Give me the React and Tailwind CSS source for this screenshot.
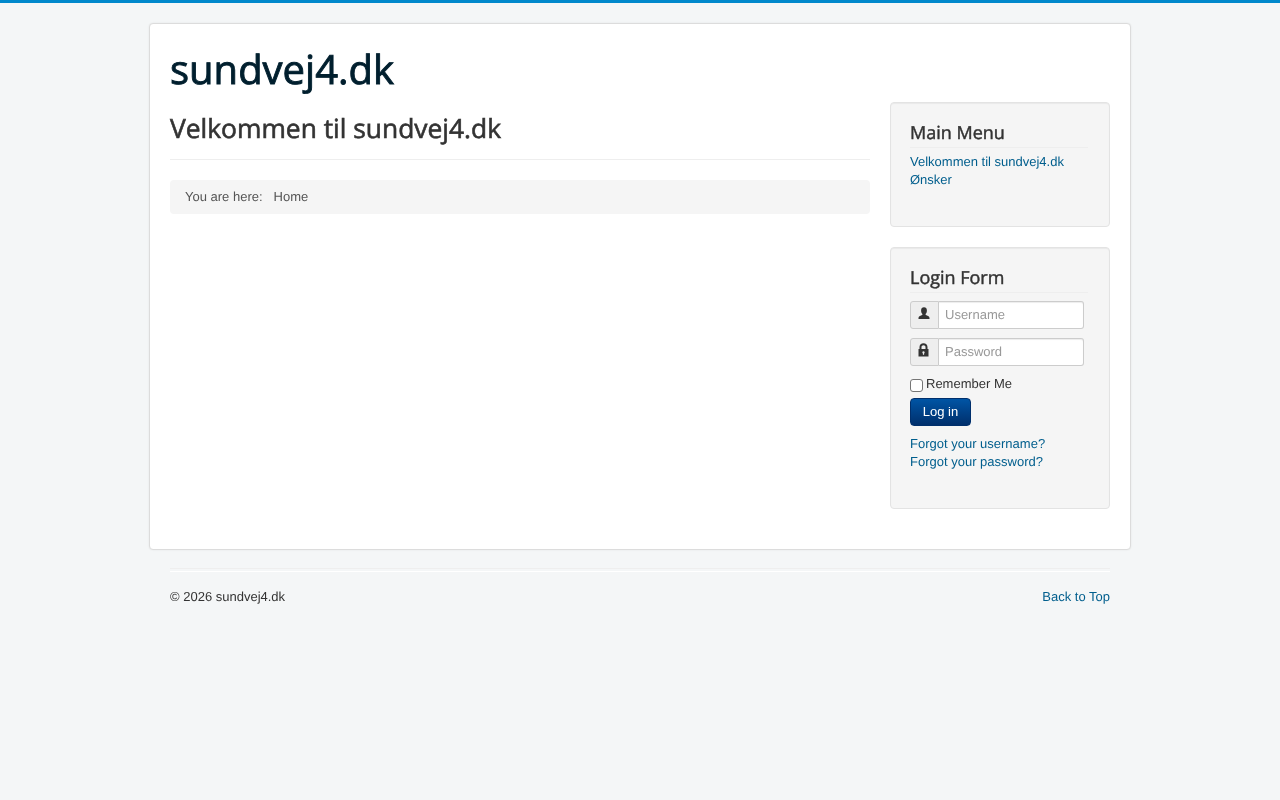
import React from "react";

const sans = "font-['Liberation_Sans',Arial,sans-serif] [text-rendering:geometricPrecision]";
const head = "font-['Open_Sans',sans-serif]";

function Well({ title, className, children }) {
  return (
    <div className={`bg-[#f5f5f5] border border-[#e3e3e3] rounded-[4px] shadow-[inset_0_1px_1px_rgba(0,0,0,0.05)] pt-[18px] px-[19px] pb-[37px] ${className || ""}`}>
      <h3 className={`${head} text-[18px] leading-[24px] font-normal [-webkit-text-stroke:0.45px_#333] text-[#333] border-b border-[#eeeeee] w-[178px] pb-[2px] mb-[5px]`}>{title}</h3>
      {children}
    </div>
  );
}

function InputRow({ icon, placeholder, className }) {
  return (
    <div className={`flex h-[28px] w-[174px] ${className || ""}`}>
      <div className="w-[29px] bg-[#eeeeee] border border-[#cccccc] rounded-l-[3px] flex items-start justify-center pt-[5px] pr-[2px] shrink-0">{icon}</div>
      <input
        placeholder={placeholder}
        className={`${sans} w-[145px] h-[28px] border border-l-0 border-[#cccccc] bg-white rounded-r-[3px] pl-[6px] pb-[2px] text-[13px] text-[#555] placeholder:text-[#999999] outline-none shadow-[inset_0_1px_1px_rgba(0,0,0,0.075)]`}
      />
    </div>
  );
}

const UserIcon = (
  <svg width="12" height="12" viewBox="0 0 12 12" fill="#333">
    <path d="M0.5 12 V11 C0.5 9.6 2 9 3.6 8.3 C4.3 8 4.6 7.6 4.5 7 C3.7 6.3 3.1 5 3.1 3.4 C3.1 1.4 4.2 0.3 6 0.3 C7.8 0.3 8.9 1.4 8.9 3.4 C8.9 5 8.3 6.3 7.5 7 C7.4 7.6 7.7 8 8.4 8.3 C10 9 11.5 9.6 11.5 11 V12 Z" />
  </svg>
);

const LockIcon = (
  <svg width="11" height="14" viewBox="0 0 11 14" fill="#333" className="-mt-[1px]">
    <path fillRule="evenodd" d="M0.5 6 H1.5 V4 C1.5 1.8 3.2 0.3 5.5 0.3 C7.8 0.3 9.5 1.8 9.5 4 V6 H10.5 V13.5 H0.5 Z M3.5 6 H7.5 V4 C7.5 2.9 6.6 2.2 5.5 2.2 C4.4 2.2 3.5 2.9 3.5 4 Z M5.5 8.2 A1.2 1.2 0 0 0 4.9 10.4 V11.8 H6.1 V10.4 A1.2 1.2 0 0 0 5.5 8.2 Z" />
  </svg>
);

const link = "text-[#005e8d] block";

export default function App() {
  return (
    <div className={`${sans} will-change-transform min-h-[800px] bg-[#f4f6f7] border-t-[3px] border-[#0088cc] text-[13px] leading-[18px] text-[#333] pt-[20px]`}>
      <div className="w-[982px] mx-auto bg-white border border-[#dcdcdc] rounded-[4px] h-[527px] shadow-[0_0_2px_rgba(0,0,0,0.08)] pt-[20px] px-[20px]">
        <div className={`${head} text-[40px] leading-[48px] font-normal [-webkit-text-stroke:0.9px_#001f2e] text-[#001f2e] h-[58px] pt-[1px]`}>sundvej4.dk</div>
        <div className="flex gap-[20px]">
          <div className="w-[700px]">
            <div className="border-b border-[#eeeeee] h-[58px] pt-[8px] mb-[20px]">
              <h2 className={`${head} text-[26.4px] leading-[36px] font-normal [-webkit-text-stroke:0.6px_#333] text-[#333]`}>Velkommen til sundvej4.dk</h2>
            </div>
            <div className="bg-[#f5f5f5] rounded-[4px] h-[34px] px-[15px] py-[8px] text-[#555] flex">
              <span>You are here:</span>
              <span className="ml-[11px]">Home</span>
            </div>
          </div>
          <div className="w-[220px]">
            <Well title="Main Menu" className="h-[125px] mb-[20px]">
              <a className={link}>Velkommen til sundvej4.dk</a>
              <a className={link}>Ønsker</a>
            </Well>
            <Well title="Login Form" className="h-[262px]">
              <InputRow icon={UserIcon} placeholder="Username" className="mt-[8px]" />
              <InputRow icon={LockIcon} placeholder="Password" className="mt-[9px]" />
              <label className="flex items-start h-[18px] mt-[9px]">
                <input type="checkbox" className="appearance-none w-[13px] h-[13px] mt-[4px] mr-[3px] border border-[#767676] rounded-[3px] bg-white" />
                <span>Remember Me</span>
              </label>
              <button className="block mt-[5px] w-[61px] h-[28px] rounded-[4px] border border-[#002f6c] bg-gradient-to-b from-[#0055a5] to-[#002f6c] text-white text-[13px] leading-[18px]">Log in</button>
              <a className={`${link} mt-[9px]`}>Forgot your username?</a>
              <a className={link}>Forgot your password?</a>
            </Well>
          </div>
        </div>
      </div>
      <div className="w-[940px] mx-auto mt-[18px]">
        <div className="h-[2px] border-t border-[#eeeeee] border-b border-b-white box-content" />
        <div className="flex justify-between mt-[16px]">
          <span>© 2026 sundvej4.dk</span>
          <a className="text-[#005e8d]">Back to Top</a>
        </div>
      </div>
    </div>
  );
}
